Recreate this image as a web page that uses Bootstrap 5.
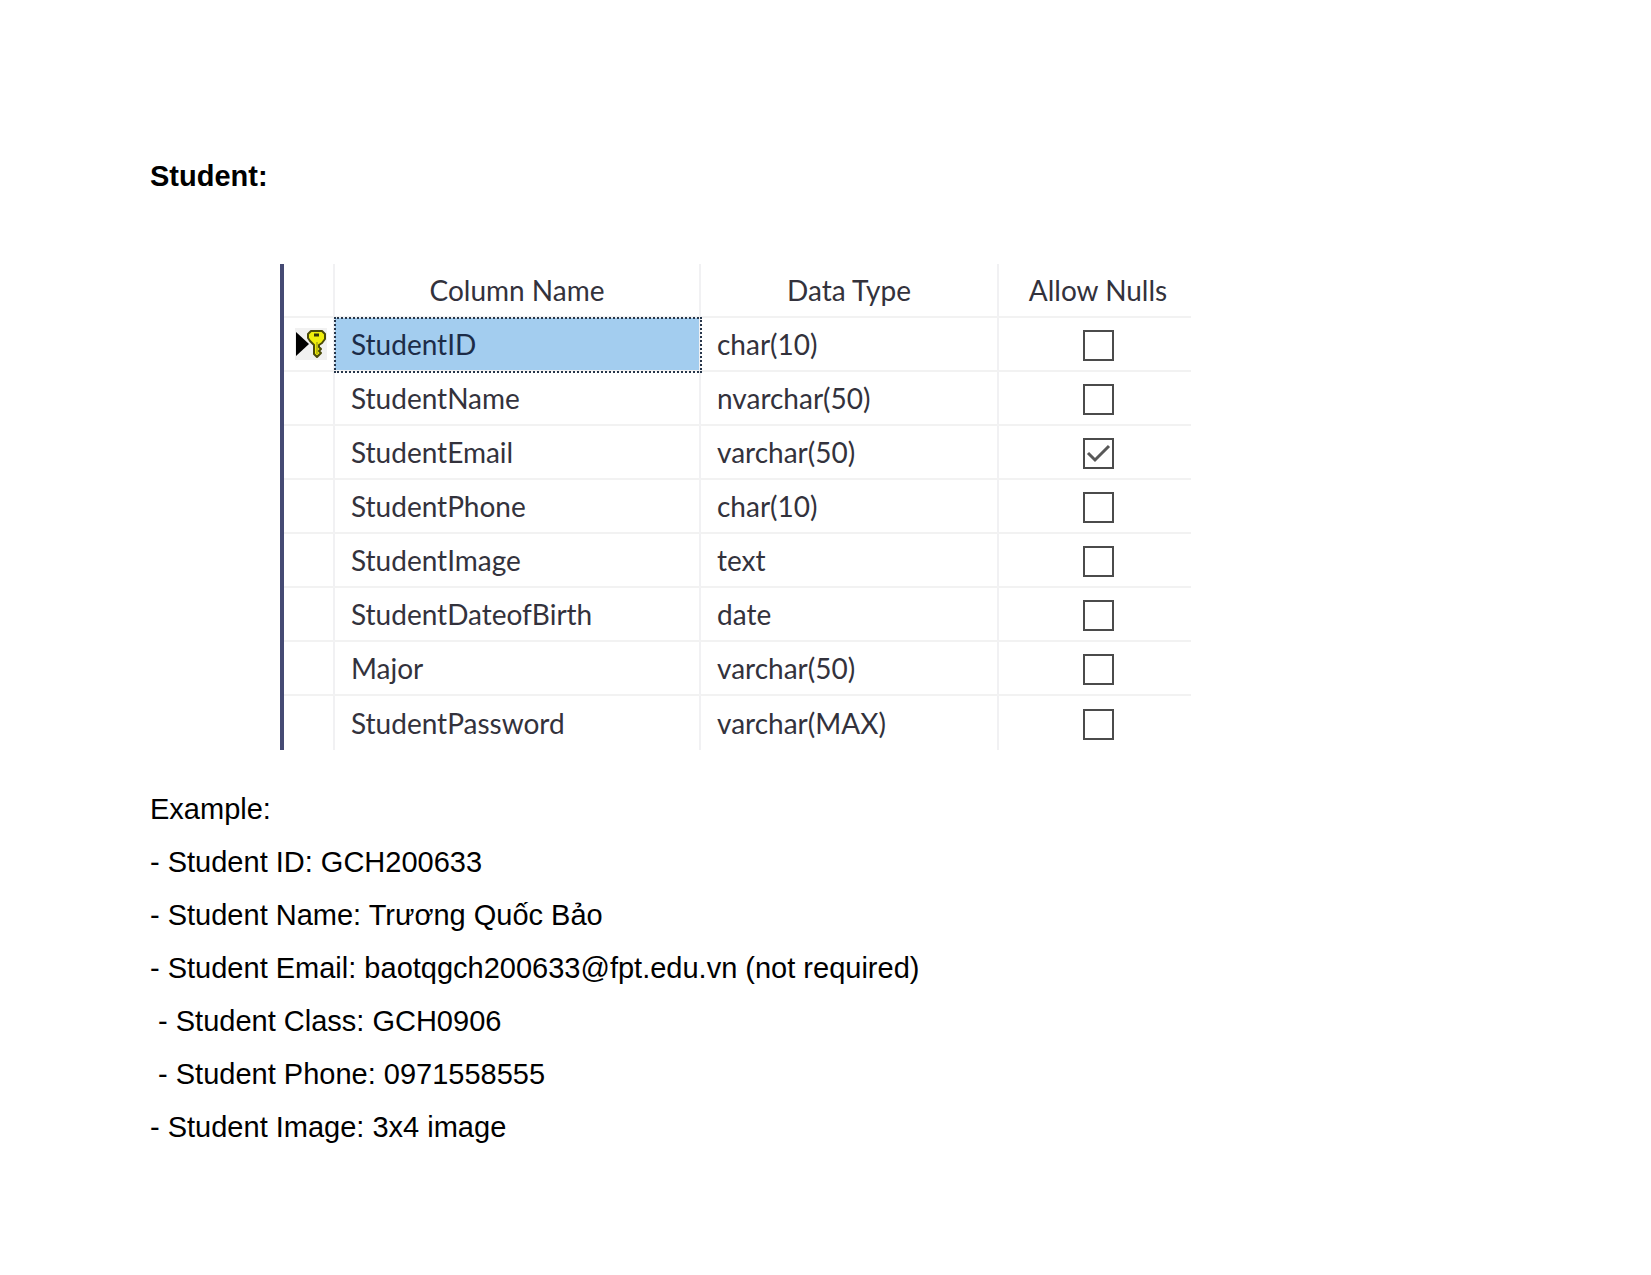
<!DOCTYPE html>
<html lang="en">
<head>
<meta charset="utf-8">
<meta name="viewport" content="width=device-width, initial-scale=1">
<title>Student table</title>
<link href="https://cdn.jsdelivr.net/npm/bootstrap@5.3.0/dist/css/bootstrap.min.css" rel="stylesheet">
<style>
  body { background: #fff; color: #000; font-family: "Liberation Sans", Arial, sans-serif; font-size: 29px; line-height: 53px; }
  .doc-page { padding: 150px 150px 96px; }
  .doc-title { font-size: 29px; line-height: 53px; font-weight: 700; margin-bottom: 61px; }
  .designer { max-width: 911px; margin: 0 0 33px 130px; border-left: 4px solid #454a73; }
  .designer-grid { table-layout: fixed; width: 100%; border-collapse: separate; border-spacing: 0; font-family: Lato, "Open Sans", sans-serif; font-size: 28px; line-height: 32px; color: #33323c; }
  .designer-grid th, .designer-grid td { height: 54px; padding: 0 16px 1px; font-weight: 400; vertical-align: middle; white-space: nowrap; border-right: 2px solid #f1f1f3; border-bottom: 2px solid #f2f2f2; }
  .designer-grid th { text-align: center; }
  .designer-grid tr > :last-child { border-right: 0; padding: 0 0 1px 6px; text-align: center; }
  .designer-grid tr > :first-child { padding: 0 0 0 11px; }
  .designer-grid tbody tr:last-child td { border-bottom: 0; }
  .c-key { width: 51px; } .c-name { width: 366px; } .c-type { width: 298px; }
  .designer-grid td.picked { background: #a3cdef; outline: 2px dotted #27364a; outline-offset: -1px; color: #1c2c48; }
  .row-mark { background: #f1f1f1; width: 32px; height: 32px; }
  .designer-grid .form-check-input { width: 31px; height: 31px; margin: 0; border: 2px solid #4b4b4b; border-radius: 0; background-color: #fff; vertical-align: middle; float: none; }
  .designer-grid .form-check-input:checked { background-image: url("data:image/svg+xml,%3Csvg xmlns='http://www.w3.org/2000/svg' viewBox='0 0 27 27'%3E%3Cpath d='M3 13L10 20L24 6' fill='none' stroke='%23585858' stroke-width='3'/%3E%3C/svg%3E"); background-size: 100%; }
</style>
</head>
<body>
<main class="doc-page">
  <h1 class="doc-title">Student:</h1>
  <div class="designer">
    <table class="designer-grid">
      <colgroup><col class="c-key"><col class="c-name"><col class="c-type"><col></colgroup>
      <thead><tr><th></th><th scope="col">Column Name</th><th scope="col">Data Type</th><th scope="col">Allow Nulls</th></tr></thead>
      <tbody>
        <tr><td><svg class="row-mark d-block" viewBox="0 0 32 32" aria-hidden="true"><path d="M1 4L14 16L1 28Z" fill="#000"/><path d="M16 3H27L30 6V11L27 15L24 17V19L26 21L24 23L26 25L22 29L19 26V17L15 13L13 10V6Z" fill="#f0ee0c" stroke="#4b4b0b" stroke-width="2" stroke-linejoin="round"/><path d="M19 7H24" stroke="#34340a" stroke-width="3"/><path d="M22 14V26" stroke="#8a8a10" stroke-width="1"/></svg></td><td class="picked">StudentID</td><td>char(10)</td><td><input class="form-check-input" type="checkbox" aria-label="StudentID allow nulls"></td></tr>
        <tr><td></td><td>StudentName</td><td>nvarchar(50)</td><td><input class="form-check-input" type="checkbox" aria-label="StudentName allow nulls"></td></tr>
        <tr><td></td><td>StudentEmail</td><td>varchar(50)</td><td><input class="form-check-input" type="checkbox" checked aria-label="StudentEmail allow nulls"></td></tr>
        <tr><td></td><td>StudentPhone</td><td>char(10)</td><td><input class="form-check-input" type="checkbox" aria-label="StudentPhone allow nulls"></td></tr>
        <tr><td></td><td>StudentImage</td><td>text</td><td><input class="form-check-input" type="checkbox" aria-label="StudentImage allow nulls"></td></tr>
        <tr><td></td><td>StudentDateofBirth</td><td>date</td><td><input class="form-check-input" type="checkbox" aria-label="StudentDateofBirth allow nulls"></td></tr>
        <tr><td></td><td>Major</td><td>varchar(50)</td><td><input class="form-check-input" type="checkbox" aria-label="Major allow nulls"></td></tr>
        <tr><td></td><td>StudentPassword</td><td>varchar(MAX)</td><td><input class="form-check-input" type="checkbox" aria-label="StudentPassword allow nulls"></td></tr>
      </tbody>
    </table>
  </div>
  <p class="mb-0">Example:</p>
  <p class="mb-0">- Student ID: GCH200633</p>
  <p class="mb-0">- Student Name: Trương Quốc Bảo</p>
  <p class="mb-0">- Student Email: baotqgch200633@fpt.edu.vn (not required)</p>
  <p class="mb-0">&nbsp;- Student Class: GCH0906</p>
  <p class="mb-0">&nbsp;- Student Phone: 0971558555</p>
  <p class="mb-0">- Student Image: 3x4 image</p>
</main>
<script src="https://cdn.jsdelivr.net/npm/bootstrap@5.3.0/dist/js/bootstrap.bundle.min.js"></script>
</body>
</html>
